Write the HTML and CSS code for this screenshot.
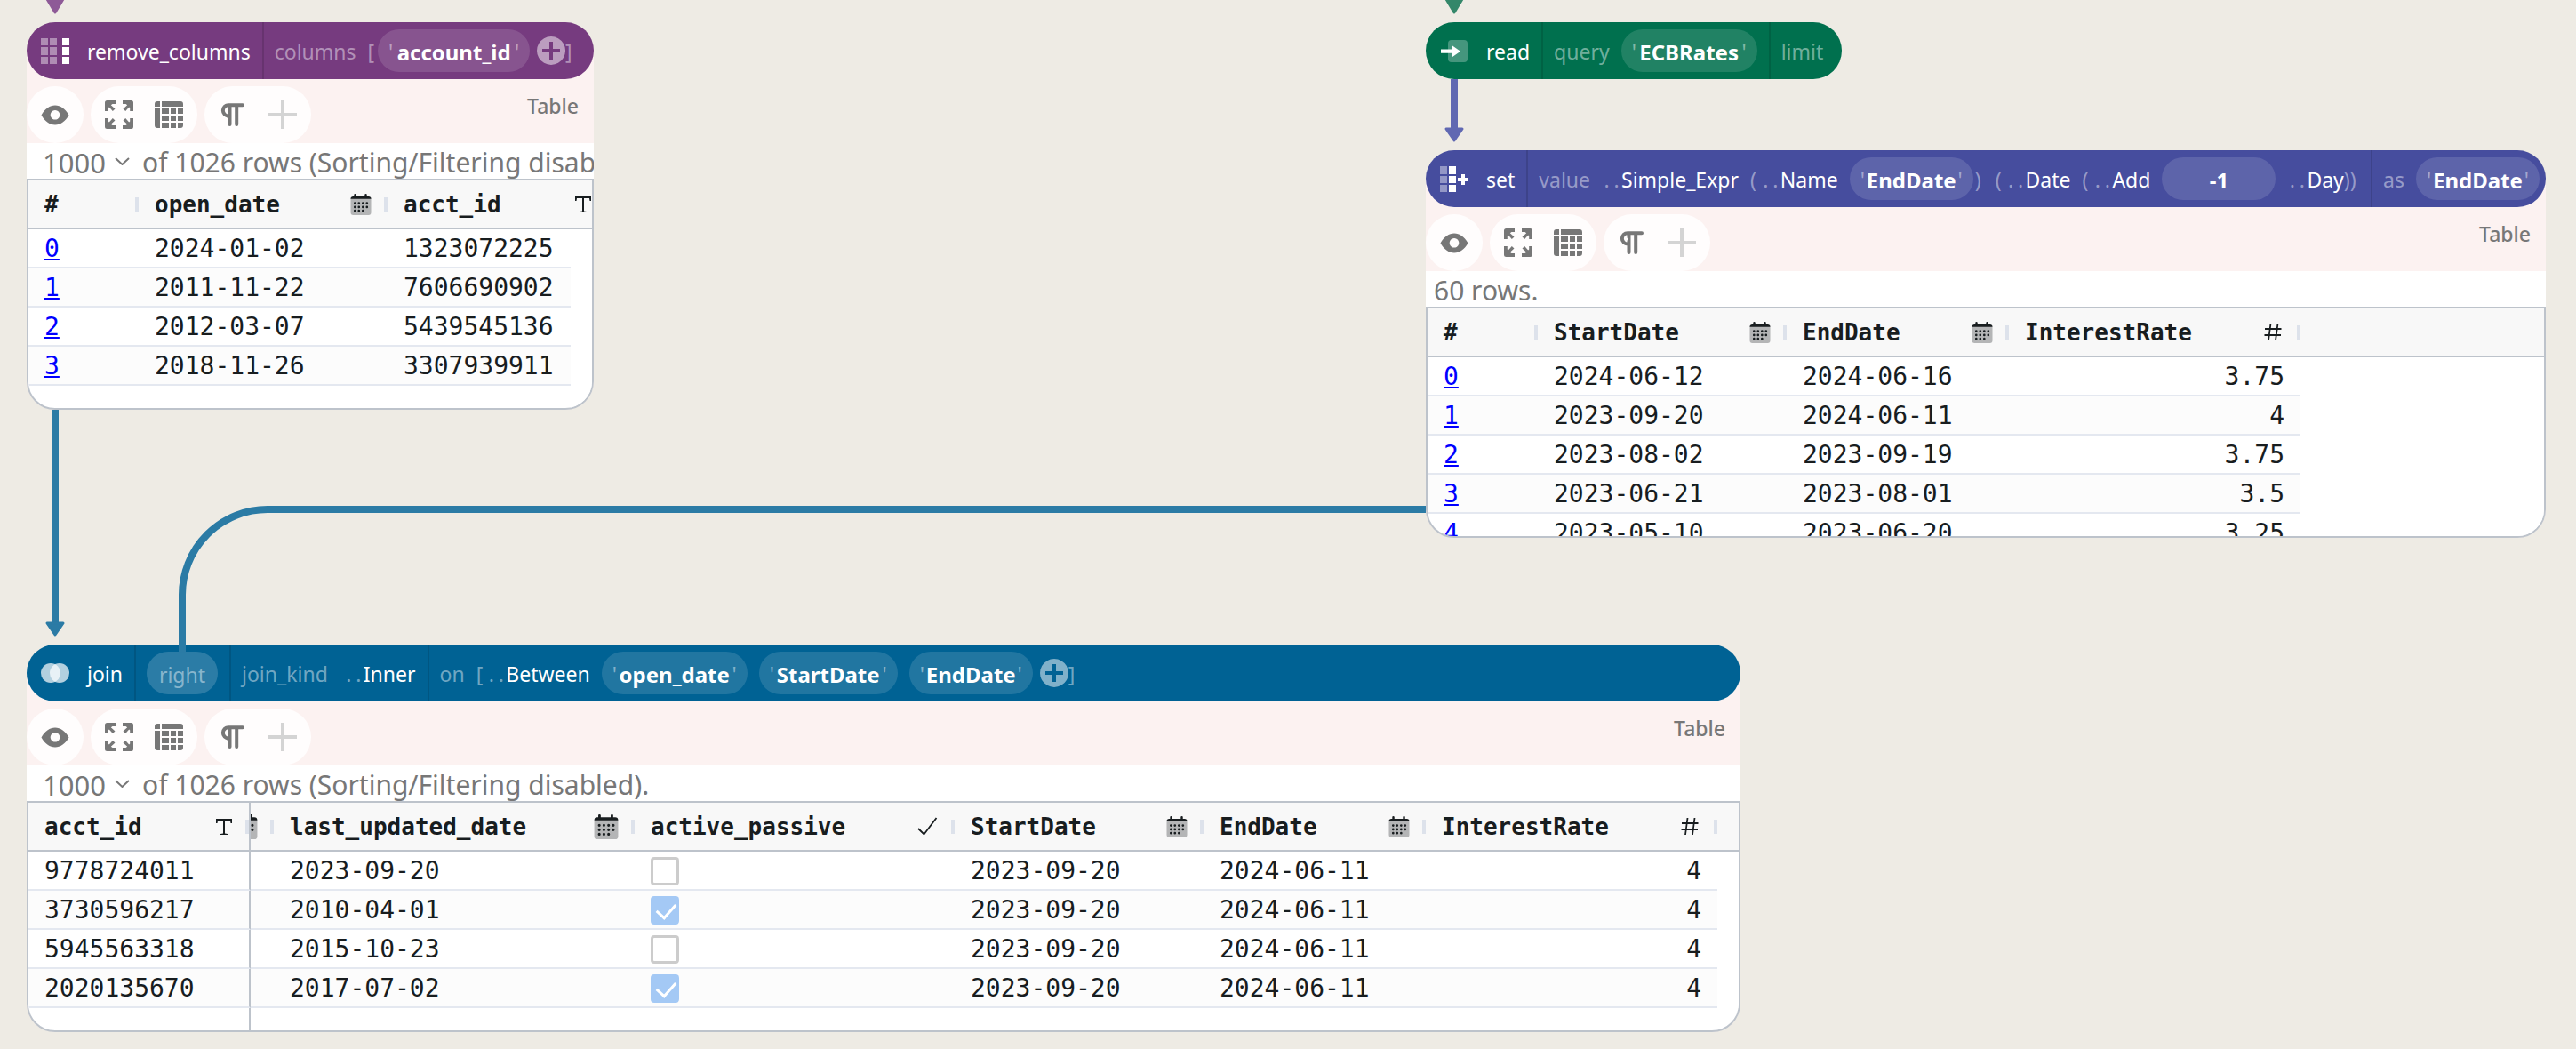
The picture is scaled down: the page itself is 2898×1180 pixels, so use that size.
FILE: index.html
```html
<!DOCTYPE html>
<html lang="en">
<head>
<meta charset="utf-8">
<title>Graph editor</title>
<link rel="stylesheet" href="styles.css">
</head>
<body>
<svg class="sprite" aria-hidden="true">
  <symbol id="remove-columns" viewBox="0 0 32 32">
    <path opacity=".42" d="M0 2h8v8H0zM10 2h8v8h-8zM0 12h8v9H0zM10 12h8v9h-8zM0 23h8v8H0zM10 23h8v8h-8z"/>
    <path d="M24 2h8v8h-8zM24 12h8v9h-8zM24 23h8v8h-8z"/>
  </symbol>
  <symbol id="add-column" viewBox="0 0 32 32">
    <path opacity=".42" d="M0 2h8v9H0zM0 13h8v8H0zM0 23h8v8H0z"/>
    <path d="M10 2h8v9h-8zM10 13h8v8h-8zM10 23h8v8h-8zM24 11h4v4h4v4h-4v4h-4v-4h-4v-4h4z"/>
  </symbol>
  <symbol id="read-in" viewBox="0 0 32 32">
    <rect opacity=".27" x="9" y="4" width="22" height="25" rx="4"/>
    <path d="M1 14.500h13V10.500l9 6.200-9 6.200V18.700H1z"/>
  </symbol>
  <symbol id="join" viewBox="0 0 32 32">
    <circle opacity=".7" cx="11" cy="16" r="11"/><circle opacity=".7" cx="21" cy="16" r="11"/>
  </symbol>
  <symbol id="eye" viewBox="0 0 32 32">
    <path fill-rule="evenodd" d="M.500 16.500C5 9 10 5.500 16 5.500S27 9 31.500 16.500C27 24 22 27.500 16 27.500S5 24 .500 16.500zM16 11a5.300 5.300 0 1 0 .01 0z"/>
  </symbol>
  <symbol id="expand" viewBox="0 0 32 32">
    <g id="corner"><path d="M2.500 0H12V4H8.500L6.800 5.200 11.500 9.500 8.800 12 4.800 7.500 3.800 8.500V12H0V2.500Q0 0 2.500 0z"/></g>
    <use href="#corner" transform="matrix(-1 0 0 1 32 0)"/>
    <use href="#corner" transform="matrix(1 0 0 -1 0 32)"/>
    <use href="#corner" transform="matrix(-1 0 0 -1 32 32)"/>
  </symbol>
  <symbol id="grid" viewBox="0 0 32 32">
    <path d="M3 1H6V7H0V4Q0 1 3 1zM8 1H29Q32 1 32 4V7H8zM0 9H6V31H3Q0 31 0 28zM8 9h8v6H8zM18 9h6v6h-6zM26 9h6v6h-6zM8 17h8v6H8zM18 17h6v6h-6zM26 17h6v6h-6zM8 25h8v6H8zM18 25h6v6h-6zM26 25h6v3q0 3-3 3h-3z"/>
  </symbol>
  <symbol id="pilcrow" viewBox="0 0 32 32">
    <path fill="none" stroke="currentColor" stroke-width="4" stroke-linecap="round" stroke-linejoin="round" d="M27 5.200H11A6 6 0 0 0 11 17.500h1.500V27M12.500 5.200V27M20.200 5.200V27"/>
    <path d="M11 10.500v3a1.500 1.500 0 0 1 0-3z" fill="#fff"/>
  </symbol>
  <symbol id="plus" viewBox="0 0 32 32"><path d="M14 0h4v14h14v4H18v14h-4V18H0v-4h14z"/></symbol>
  <symbol id="plus-disc" viewBox="0 0 32 32">
    <path fill-rule="evenodd" d="M16 0a16 16 0 1 0 .01 0zM14 6h4v8h8v4h-8v8h-4v-8H6v-4h8z"/>
  </symbol>
  <symbol id="calendar" viewBox="0 0 24 25">
    <rect y="4" width="24" height="21" rx="3" fill="#b4b5b6"/>
    <path d="M0 6Q0 3 3 3H4V1Q4 0 5.200 0T6.500 1V3h10V1Q16.500 0 17.800 0T19 1V3h2Q24 3 24 6z"/>
    <path fill="none" stroke="currentColor" stroke-width="2.800" stroke-linecap="round" stroke-dasharray="0 4.700" d="M5 11H20M5 15.500H20M5 20H15"/>
  </symbol>
  <symbol id="type-text" viewBox="0 0 24 24"><path d="M3 3H21V8H19.500L19 5H13V19.500L16 20V21H8V20L11 19.500V5H5L4.500 8H3z"/></symbol>
  <symbol id="type-number" viewBox="0 0 24 24"><path fill="none" stroke="currentColor" stroke-width="1.800" d="M8.500 2 6 21M16.500 2 14 21M2 8H20.500M1.500 15H20"/></symbol>
  <symbol id="type-check" viewBox="0 0 24 24"><path fill="none" stroke="currentColor" stroke-width="1.800" d="M1 14 7.500 20.500 21.500 2"/></symbol>
</svg>

<main class="canvas">

  <article class="node node--remove">
    <header class="bar">
      <div class="seg seg--first"><svg class="icon"><use href="#remove-columns"/></svg><span>remove_columns</span></div>
      <div class="seg"><span class="dim">columns</span>
        <div class="run"><span class="dim bracket">[</span><label class="chip chip--xl"><span class="dim">'</span><input aria-label="Column" value="account_id"><span class="dim">'</span></label><button class="add" aria-label="Add column"><svg class="icon"><use href="#plus-disc"/></svg></button><span class="dim">]</span></div>
      </div>
    </header>
    <section class="panel">
      <div class="toolbar">
        <div class="group"><button aria-label="Show"><svg class="icon"><use href="#eye"/></svg></button></div>
        <div class="group"><button aria-label="Full screen"><svg class="icon"><use href="#expand"/></svg></button><button aria-label="Table view"><svg class="icon"><use href="#grid"/></svg></button></div>
        <div class="group"><button aria-label="Formatting"><svg class="icon"><use href="#pilcrow"/></svg></button><button class="faint" aria-label="Add"><svg class="icon"><use href="#plus"/></svg></button></div>
        <span class="kind">Table</span>
      </div>
      <div class="rows rows--select"><select aria-label="Row limit"><option>1000</option></select><svg class="chevron" viewBox="0 0 17 9"><path d="M1 1 8.500 8 16 1"/></svg><span>of 1026 rows (Sorting/Filtering disabled).</span></div>
      <div class="grid">
        <table class="table--remove">
          <colgroup><col class="c-124"><col class="c-280"><col class="c-250"></colgroup>
          <thead><tr>
            <th><div class="head">#</div></th>
            <th><div class="head">open_date<svg class="type"><use href="#calendar"/></svg></div></th>
            <th><div class="head">acct_id<svg class="type"><use href="#type-text"/></svg></div></th>
          </tr></thead>
          <tbody>
            <tr><td><a href="#0">0</a></td><td>2024-01-02</td><td>1323072225</td></tr>
            <tr><td><a href="#1">1</a></td><td>2011-11-22</td><td>7606690902</td></tr>
            <tr><td><a href="#2">2</a></td><td>2012-03-07</td><td>5439545136</td></tr>
            <tr><td><a href="#3">3</a></td><td>2018-11-26</td><td>3307939911</td></tr>
          </tbody>
        </table>
        <div class="gutter"></div>
      </div>
    </section>
  </article>

  <article class="node node--read">
    <header class="bar">
      <div class="seg seg--first"><svg class="icon"><use href="#read-in"/></svg><span>read</span></div>
      <div class="seg"><span class="dim">query</span><label class="chip chip--l"><span class="dim">'</span><input aria-label="Query" value="ECBRates"><span class="dim">'</span></label></div>
      <div class="seg"><span class="dim">limit</span></div>
    </header>
  </article>

  <article class="node node--set">
    <header class="bar">
      <div class="seg seg--first"><svg class="icon"><use href="#add-column"/></svg><span>set</span></div>
      <div class="seg">
        <span class="dim">value</span>
        <div class="run"><span class="dots"><i>.</i><i>.</i></span><span>Simple_Expr</span></div>
        <div class="run"><span class="dim paren">(</span><span class="dots"><i>.</i><i>.</i></span><span>Name</span></div>
        <div class="run"><label class="chip chip--s"><span class="dim">'</span><input aria-label="Name" value="EndDate"><span class="dim">'</span></label><span class="dim close">)</span></div>
        <div class="run"><span class="dim paren">(</span><span class="dots"><i>.</i><i>.</i></span><span>Date</span></div>
        <div class="run"><span class="dim paren">(</span><span class="dots"><i>.</i><i>.</i></span><span>Add</span></div>
        <label class="chip chip--number"><input aria-label="Amount" value="-1"></label>
        <div class="run"><span class="dots"><i>.</i><i>.</i></span><span>Day</span><span class="dim">))</span></div>
      </div>
      <div class="seg seg--last"><span class="dim">as</span><label class="chip chip--s"><span class="dim">'</span><input aria-label="New name" value="EndDate"><span class="dim">'</span></label></div>
    </header>
    <section class="panel">
      <div class="toolbar">
        <div class="group"><button aria-label="Show"><svg class="icon"><use href="#eye"/></svg></button></div>
        <div class="group"><button aria-label="Full screen"><svg class="icon"><use href="#expand"/></svg></button><button aria-label="Table view"><svg class="icon"><use href="#grid"/></svg></button></div>
        <div class="group"><button aria-label="Formatting"><svg class="icon"><use href="#pilcrow"/></svg></button><button class="faint" aria-label="Add"><svg class="icon"><use href="#plus"/></svg></button></div>
        <span class="kind">Table</span>
      </div>
      <div class="rows"><span>60 rows.</span></div>
      <div class="grid">
        <table>
          <colgroup><col class="c-124"><col class="c-280"><col class="c-250"><col class="c-328"><col></colgroup>
          <thead><tr>
            <th><div class="head">#</div></th>
            <th><div class="head">StartDate<svg class="type"><use href="#calendar"/></svg></div></th>
            <th><div class="head">EndDate<svg class="type"><use href="#calendar"/></svg></div></th>
            <th><div class="head">InterestRate<svg class="type"><use href="#type-number"/></svg></div></th>
            <th class="rest"></th>
          </tr></thead>
          <tbody>
            <tr><td><a href="#0">0</a></td><td>2024-06-12</td><td>2024-06-16</td><td class="num">3.75</td><td class="rest"></td></tr>
            <tr><td><a href="#1">1</a></td><td>2023-09-20</td><td>2024-06-11</td><td class="num">4</td><td class="rest"></td></tr>
            <tr><td><a href="#2">2</a></td><td>2023-08-02</td><td>2023-09-19</td><td class="num">3.75</td><td class="rest"></td></tr>
            <tr><td><a href="#3">3</a></td><td>2023-06-21</td><td>2023-08-01</td><td class="num">3.5</td><td class="rest"></td></tr>
            <tr><td><a href="#4">4</a></td><td>2023-05-10</td><td>2023-06-20</td><td class="num">3.25</td><td class="rest"></td></tr>
          </tbody>
        </table>
      </div>
    </section>
  </article>

  <article class="node node--join">
    <header class="bar">
      <div class="seg seg--first"><svg class="icon"><use href="#join"/></svg><span>join</span></div>
      <div class="seg"><span class="chip chip--port"><span class="dim">right</span></span></div>
      <div class="seg seg--roomy"><span class="dim">join_kind</span><div class="run"><span class="dots"><i>.</i><i>.</i></span><span>Inner</span></div></div>
      <div class="seg">
        <span class="dim">on</span>
        <div class="run"><span class="dim bracket">[</span><span class="dots"><i>.</i><i>.</i></span><span>Between</span></div>
        <label class="chip chip--xl2"><span class="dim">'</span><input aria-label="Value column" value="open_date"><span class="dim">'</span></label>
        <label class="chip chip--l2"><span class="dim">'</span><input aria-label="Lower bound" value="StartDate"><span class="dim">'</span></label>
        <div class="run"><label class="chip chip--s"><span class="dim">'</span><input aria-label="Upper bound" value="EndDate"><span class="dim">'</span></label><button class="add" aria-label="Add condition"><svg class="icon"><use href="#plus-disc"/></svg></button><span class="dim">]</span></div>
      </div>
    </header>
    <section class="panel">
      <div class="toolbar">
        <div class="group"><button aria-label="Show"><svg class="icon"><use href="#eye"/></svg></button></div>
        <div class="group"><button aria-label="Full screen"><svg class="icon"><use href="#expand"/></svg></button><button aria-label="Table view"><svg class="icon"><use href="#grid"/></svg></button></div>
        <div class="group"><button aria-label="Formatting"><svg class="icon"><use href="#pilcrow"/></svg></button><button class="faint" aria-label="Add"><svg class="icon"><use href="#plus"/></svg></button></div>
        <span class="kind">Table</span>
      </div>
      <div class="rows rows--select"><select aria-label="Row limit"><option>1000</option></select><svg class="chevron" viewBox="0 0 17 9"><path d="M1 1 8.500 8 16 1"/></svg><span>of 1026 rows (Sorting/Filtering disabled).</span></div>
      <div class="grid">
        <table>
          <colgroup><col class="c-250"><col class="c-26"><col class="c-406"><col class="c-360"><col class="c-280"><col class="c-250"><col class="c-328"><col></colgroup>
          <thead><tr>
            <th class="pinned"><div class="head">acct_id<svg class="type"><use href="#type-text"/></svg></div></th>
            <th><div class="head head--cut"><svg class="type type--large"><use href="#calendar"/></svg></div></th>
            <th><div class="head">last_updated_date<svg class="type type--large"><use href="#calendar"/></svg></div></th>
            <th><div class="head">active_passive<svg class="type"><use href="#type-check"/></svg></div></th>
            <th><div class="head">StartDate<svg class="type"><use href="#calendar"/></svg></div></th>
            <th><div class="head">EndDate<svg class="type"><use href="#calendar"/></svg></div></th>
            <th><div class="head">InterestRate<svg class="type"><use href="#type-number"/></svg></div></th>
            <th class="rest"></th>
          </tr></thead>
          <tbody>
            <tr><td class="pinned">9778724011</td><td></td><td>2023-09-20</td><td><input type="checkbox" aria-label="active_passive" disabled></td><td>2023-09-20</td><td>2024-06-11</td><td class="num">4</td><td class="rest"></td></tr>
            <tr><td class="pinned">3730596217</td><td></td><td>2010-04-01</td><td><input type="checkbox" aria-label="active_passive" checked disabled></td><td>2023-09-20</td><td>2024-06-11</td><td class="num">4</td><td class="rest"></td></tr>
            <tr><td class="pinned">5945563318</td><td></td><td>2015-10-23</td><td><input type="checkbox" aria-label="active_passive" disabled></td><td>2023-09-20</td><td>2024-06-11</td><td class="num">4</td><td class="rest"></td></tr>
            <tr><td class="pinned">2020135670</td><td></td><td>2017-07-02</td><td><input type="checkbox" aria-label="active_passive" checked disabled></td><td>2023-09-20</td><td>2024-06-11</td><td class="num">4</td><td class="rest"></td></tr>
            <tr class="tail"><td class="pinned"></td><td colspan="7"></td></tr>
          </tbody>
        </table>
      </div>
    </section>
  </article>

  <svg class="edges" aria-hidden="true">
    <g class="edge edge--purple"><path class="tip" d="M53 -1H71L62 14z"/></g>
    <g class="edge edge--green"><path class="tip" d="M1627 -1H1645L1636 14z"/></g>
    <g class="edge edge--indigo"><path class="line" d="M1636 89V146"/><path class="tip" d="M1627 145H1645L1636 158z"/></g>
    <g class="edge edge--blue"><path class="line" d="M62 461V702"/><path class="tip" d="M53 701H71L62 714z"/>
      <path class="line" d="M1604 573H301A96 96 0 0 0 205 669V734"/></g>
  </svg>
</main>
</body>
</html>
```
FILE: styles.css
```css
* { box-sizing: border-box; }

body {
  margin: 0;
  background: #eeebe4;
  font-family: "Noto Sans", "Open Sans", sans-serif;
  font-size: 23px;
  line-height: 32px;
}

button, input, select {
  margin: 0;
  padding: 0;
  border: 0;
  background: none;
  color: inherit;
  font: inherit;
}

button { display: flex; cursor: pointer; }

.sprite { display: none; }

.canvas {
  position: relative;
  min-height: 100vh;
  overflow: hidden;
}

.edges {
  position: absolute;
  inset: 0;
  z-index: 2;
  width: 100%;
  height: 100%;
  pointer-events: none;
}

.edge .line { fill: none; stroke: currentColor; stroke-width: 8; }
.edge .tip { fill: currentColor; stroke: currentColor; stroke-width: 3; stroke-linejoin: round; }
.edge--purple { color: #8e5a97; }
.edge--green { color: #34876a; }
.edge--indigo { color: #6068b2; }
.edge--blue { color: #2b7ba5; }

/* Nodes */
.node { position: absolute; }
.node--remove { left: 30px; top: 25px; width: 638px; --node: #763b7f; }
.node--read { left: 1604px; top: 25px; width: 468px; --node: #00704e; }
.node--set { left: 1604px; top: 169px; width: 1260px; --node: #464d9e; }
.node--join { left: 30px; top: 725px; width: 1928px; --node: #006294; }

.bar {
  position: relative;
  z-index: 1;
  display: flex;
  height: 64px;
  border-radius: 32px;
  background: var(--node);
  color: #fff;
  white-space: nowrap;
}

.seg {
  display: flex;
  flex: none;
  align-items: center;
  gap: 13px;
  padding: 0 13px 0 12px;
}
.seg + .seg { border-left: 2px solid rgba(0, 0, 0, .12); }
.seg--first { gap: 20px; padding-left: 16px; }
.seg--roomy { gap: 18px; }
.seg--last { margin-left: auto; padding-right: 7px; }

.seg span { padding-top: 2px; }

.run { display: flex; align-items: center; }
.dim { color: rgba(255, 255, 255, .45); }
.paren { margin-right: 5px; }
.bracket { margin-right: 4px; }
.close { margin: 0 3px 0 2px; }

.dots { display: flex; color: rgba(255, 255, 255, .45); }
.dots i { width: 11px; font-style: normal; text-align: center; }

.chip {
  display: flex;
  flex: none;
  align-items: center;
  height: 48px;
  padding: 0 12px;
  border-radius: 24px;
  background: rgba(255, 255, 255, .13);
}
.chip input {
  flex: 1;
  min-width: 0;
  height: 34px;
  padding-top: 2px;
  font-size: 24px;
  font-weight: 700;
  text-align: center;
}
.chip--port { width: 80px; justify-content: center; background: rgba(255, 255, 255, .17); }
.chip--number { width: 128px; }
.chip--s { width: 139px; }
.chip--l { width: 153px; }
.chip--l2 { width: 156px; }
.chip--xl2 { width: 164px; }
.chip--xl { width: 171px; }

.add { margin-left: 8px; color: rgba(255, 255, 255, .5); }

.icon { display: block; width: 32px; height: 32px; fill: currentColor; }

/* Visualization panel */
.panel {
  margin-top: -32px;
  padding-top: 32px;
  background: #fcf2f1;
  border-radius: 0 0 32px 32px;
}

.toolbar {
  display: flex;
  gap: 8px;
  padding-top: 8px;
  color: #777;
}
.group {
  display: flex;
  gap: 24px;
  padding: 16px;
  border-radius: 32px;
  background: #fffdfd;
}
.faint { color: #d4d4d4; }
.kind { margin: 6px 17px 0 auto; height: 32px; font-weight: 500; }

.rows {
  display: flex;
  align-items: center;
  height: 40px;
  padding-left: 9px;
  overflow: hidden;
  background: #fff;
  color: #777;
  font-size: 30px;
  line-height: 36px;
  white-space: nowrap;
}
.rows > * { flex: none; }
.rows span, .rows select { padding-top: 4px; }
.rows--select { padding-left: 18px; }
.rows select { appearance: none; width: 72px; height: 40px; font-size: 31px; }
.chevron { width: 17px; height: 9px; margin: 0 14px 0 9px; fill: none; stroke: currentColor; stroke-width: 2; }

/* Data grid */
.grid {
  position: relative;
  height: 260px;
  overflow: hidden;
  border: 2px solid #bdc3cb;
  border-radius: 0 0 32px 32px;
  background: #fff;
  color: #181d1f;
  font-family: "DejaVu Sans Mono", monospace;
}
.grid table {
  width: 100%;
  table-layout: fixed;
  border-collapse: separate;
  border-spacing: 0;
}
.grid .table--remove { width: 654px; }

.c-26 { width: 26px; }
.c-124 { width: 124px; }
.c-250 { width: 250px; }
.c-280 { width: 280px; }
.c-328 { width: 328px; }
.c-360 { width: 360px; }
.c-406 { width: 406px; }

.grid th {
  height: 55px;
  padding: 0;
  border-bottom: 2px solid #bdc3cb;
  background: #f8f8f8;
  font-size: 26px;
  font-weight: 700;
  text-align: left;
}
.head {
  position: relative;
  display: flex;
  align-items: center;
  height: 53px;
  padding: 0 18px;
  overflow: hidden;
}
.head::after {
  content: "";
  position: absolute;
  right: 0;
  width: 4px;
  height: 16px;
  background: #dde2eb;
}
.pinned .head { padding-right: 16px; }
.head--cut { justify-content: flex-end; padding-left: 0; }
.type { flex: none; width: 24px; height: 24px; margin-left: auto; fill: currentColor; }
.type--large { width: 28px; height: 28px; }

.grid td {
  height: 44px;
  padding: 2px 18px 0;
  border-bottom: 2px solid #e4e8f0;
  font-size: 28px;
  line-height: 40px;
  white-space: nowrap;
}
.grid tbody tr:nth-child(even) td { background: #fcfcfc; }
.grid .num { text-align: right; }
.grid tbody tr td.rest { border-bottom: 0; background: #fff; }
.grid .pinned { border-right: 2px solid #bdc3cb; }
.grid .tail td { height: 26px; border-bottom: 0; }

.grid a { color: #00f; text-decoration: underline; }

.gutter {
  position: absolute;
  top: 55px;
  right: 0;
  bottom: 0;
  width: 24px;
  background: #fff;
}

.grid input {
  appearance: none;
  position: relative;
  display: block;
  width: 32px;
  height: 32px;
  border: 3px solid #ccc;
  border-radius: 4px;
  background: #fff;
}
.grid input:checked { border-color: #a4c9f5; background: #a4c9f5; }
.grid input:checked::after {
  content: "";
  position: absolute;
  left: 8px;
  top: 1px;
  width: 10px;
  height: 18px;
  border: solid #fff;
  border-width: 0 3px 3px 0;
  transform: rotate(42deg);
}
```
